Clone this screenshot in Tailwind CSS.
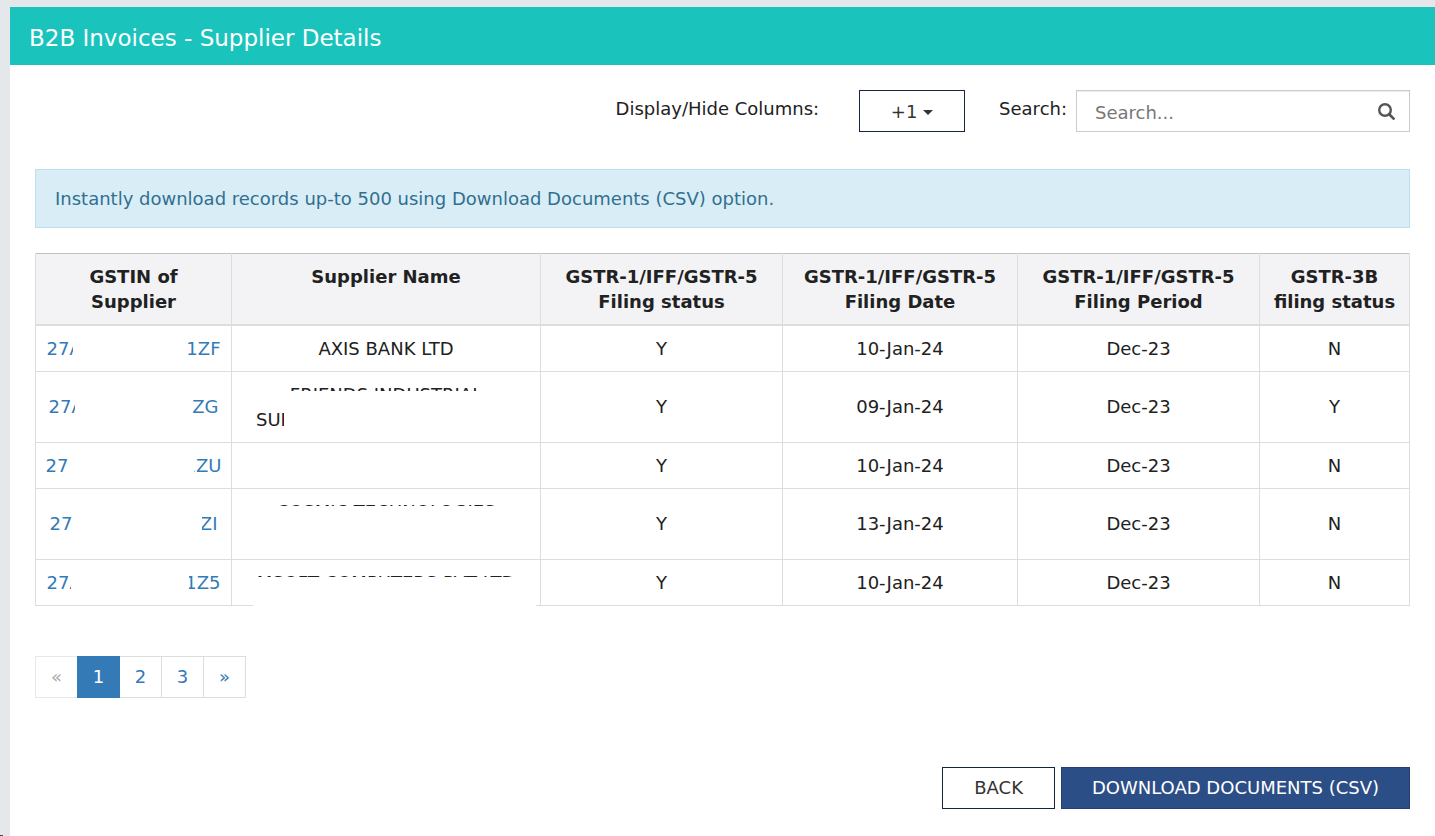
<!DOCTYPE html>
<html lang="en">
<head>
    <meta charset="UTF-8">
    <meta name="viewport" content="width=device-width, initial-scale=1.0">
    <title>B2B Invoices - Supplier Details</title>
    <script src="https://cdn.jsdelivr.net/npm/@tailwindcss/browser@4"></script>
    <style>
        body {
            font-family: Verdana, 'DejaVu Sans', sans-serif;
        }
    </style>
</head>
<body class="relative min-h-screen bg-[#e4e8eb] pt-[7px] pl-[10px] text-[18px] leading-[25px] text-[#212121]">
    <div class="min-h-[829px] bg-white">
        <header class="bg-[#1ac4bd] px-[19px] pt-[18px] pb-[14px]">
            <h1 class="text-[23px] leading-[26px] text-white">B2B Invoices - Supplier Details</h1>
        </header>

        <main class="px-[25px] pt-[25px]">
            <!-- Toolbar -->
            <div class="flex items-start justify-end">
                <label for="columns" class="mt-1.5 mr-10">Display/Hide Columns:</label>
                <button id="columns" type="button" class="mr-[34px] flex h-[42px] w-[106px] items-center justify-center gap-1.5 border border-[#17263f] text-[#333]">
                    +1
                    <svg class="mt-0.5" width="10" height="5" viewBox="0 0 10 5" fill="currentColor"><path d="M0 0h10L5 5z"/></svg>
                </button>
                <label for="search" class="mt-1.5 mr-[9px]">Search:</label>
                <div class="relative">
                    <input id="search" type="text" placeholder="Search..." class="block h-[42px] w-[334px] border border-[#ccc] pt-0.5 pr-12 pl-[18px] shadow-[inset_0_1px_1px_rgba(0,0,0,0.075)] placeholder:text-[#777]">
                    <svg class="absolute top-[13px] right-[15px] text-[#555]" width="17" height="17" viewBox="0 0 17 17" fill="none" stroke="currentColor" stroke-width="2.4">
                        <circle cx="7" cy="7" r="5.8"/>
                        <path d="M11.2 11.2l4.4 4.4" stroke-width="2.7" stroke-linecap="round"/>
                    </svg>
                </div>
            </div>

            <div class="mt-[37px] border border-[#bcdff1] bg-[#d9edf7] px-[19px] py-4 text-[#31708f]">
                Instantly download records up-to 500 using Download Documents (CSV) option.
            </div>

            <!-- Suppliers -->
            <div class="relative mt-[25px]">
                <table class="w-full table-fixed border-collapse border border-[#ddd] text-center">
                    <colgroup>
                        <col class="w-[196px]">
                        <col class="w-[309px]">
                        <col class="w-[242px]">
                        <col class="w-[235px]">
                        <col class="w-[242px]">
                        <col class="w-[150px]">
                    </colgroup>
                    <thead class="border-t border-b-2 border-[#ddd] border-t-[#c0c0c5] bg-[#f3f3f6] align-top">
                        <tr>
                            <th class="border-x border-[#ddd] py-2.5">GSTIN of<br>Supplier</th>
                            <th class="border-x border-[#ddd] py-2.5">Supplier Name</th>
                            <th class="border-x border-[#ddd] py-2.5">GSTR-1/IFF/GSTR-5<br>Filing status</th>
                            <th class="border-x border-[#ddd] py-2.5">GSTR-1/IFF/GSTR-5<br>Filing Date</th>
                            <th class="border-x border-[#ddd] py-2.5">GSTR-1/IFF/GSTR-5<br>Filing Period</th>
                            <th class="border-x border-[#ddd] py-2.5">GSTR-3B<br>filing status</th>
                        </tr>
                    </thead>
                    <tbody>
                        <tr class="h-[46px]">
                            <td class="border border-[#ddd]"><a href="#" class="mx-auto flex w-[174px] justify-between text-[#337ab7]"><span class="w-[26px] overflow-hidden">27A</span><span>1ZF</span></a></td>
                            <td class="border border-[#ddd]">AXIS BANK LTD</td>
                            <td class="border border-[#ddd]">Y</td>
                            <td class="border border-[#ddd]">10-Jan-24</td>
                            <td class="border border-[#ddd]">Dec-23</td>
                            <td class="border border-[#ddd]">N</td>
                        </tr>
                        <tr class="h-[71px]">
                            <td class="border border-[#ddd]"><a href="#" class="mx-auto flex w-[170px] justify-between text-[#337ab7]"><span class="w-[26px] overflow-hidden">27A</span><span>ZG</span></a></td>
                            <td class="border border-[#ddd] px-6 py-2.5 align-top">
                                <span class="mb-4 block h-[9px] overflow-hidden">FRIENDS INDUSTRIAL</span>
                                <span class="block w-[28px] overflow-hidden">SUP</span>
                            </td>
                            <td class="border border-[#ddd]">Y</td>
                            <td class="border border-[#ddd]">09-Jan-24</td>
                            <td class="border border-[#ddd]">Dec-23</td>
                            <td class="border border-[#ddd]">Y</td>
                        </tr>
                        <tr class="h-[46px]">
                            <td class="border border-[#ddd]"><a href="#" class="mx-auto flex w-[176px] justify-between text-[#337ab7]"><span>27</span><span class="flex w-[28px] justify-end overflow-hidden">1ZU</span></a></td>
                            <td class="border border-[#ddd]"></td>
                            <td class="border border-[#ddd]">Y</td>
                            <td class="border border-[#ddd]">10-Jan-24</td>
                            <td class="border border-[#ddd]">Dec-23</td>
                            <td class="border border-[#ddd]">N</td>
                        </tr>
                        <tr class="h-[71px]">
                            <td class="border border-[#ddd]"><a href="#" class="mx-auto flex w-[168px] justify-between text-[#337ab7]"><span>27</span><span class="flex w-[16px] justify-end overflow-hidden">ZI</span></a></td>
                            <td class="border border-[#ddd] px-6 py-2.5 align-top"><span class="block h-[7px] overflow-hidden">COSMIC TECHNOLOGIES</span></td>
                            <td class="border border-[#ddd]">Y</td>
                            <td class="border border-[#ddd]">13-Jan-24</td>
                            <td class="border border-[#ddd]">Dec-23</td>
                            <td class="border border-[#ddd]">N</td>
                        </tr>
                        <tr class="h-[46px]">
                            <td class="border border-[#ddd]"><a href="#" class="mx-auto flex w-[174px] justify-between text-[#337ab7]"><span class="w-[24px] overflow-hidden">27A</span><span class="flex w-[32px] justify-end overflow-hidden">1Z5</span></a></td>
                            <td class="border border-[#ddd] px-5 py-2.5 align-top"><span class="block h-[7px] overflow-hidden whitespace-nowrap">MSOFT COMPUTERS PVT LTD</span></td>
                            <td class="border border-[#ddd]">Y</td>
                            <td class="border border-[#ddd]">10-Jan-24</td>
                            <td class="border border-[#ddd]">Dec-23</td>
                            <td class="border border-[#ddd]">N</td>
                        </tr>
                    </tbody>
                </table>
                <!-- Cover over the last supplier name and the rule under it -->
                <div class="absolute -bottom-1 left-[218px] h-6 w-[283px] bg-white"></div>
            </div>

            <nav aria-label="Pages" class="mt-[50px] flex h-[42px] text-[#337ab7]">
                <a class="flex w-[42px] items-center justify-center border border-r-0 border-[#e8e8e8] text-[#aaa]">«</a>
                <a href="#" aria-current="page" class="flex w-[43px] items-center justify-center bg-[#337ab7] text-white">1</a>
                <a href="#" class="flex w-[42px] items-center justify-center border border-l-0 border-[#ddd]">2</a>
                <a href="#" class="flex w-[42px] items-center justify-center border border-l-0 border-[#ddd]">3</a>
                <a href="#" class="flex w-[42px] items-center justify-center border border-l-0 border-[#ddd]">»</a>
            </nav>

            <div class="mt-[69px] flex justify-end gap-1.5">
                <button type="button" class="h-[42px] border border-[#17263f] px-[31px] text-[#333]">BACK</button>
                <button type="button" class="h-[42px] border border-[#243f6d] bg-[#2c4e86] px-[30px] text-white">DOWNLOAD DOCUMENTS (CSV)</button>
            </div>
        </main>
    </div>
    <div class="absolute bottom-0 left-0 flex h-px">
        <span class="w-px bg-red-700"></span>
        <span class="w-px bg-green-700"></span>
        <span class="w-px bg-blue-700"></span>
    </div>
</body>
</html>
